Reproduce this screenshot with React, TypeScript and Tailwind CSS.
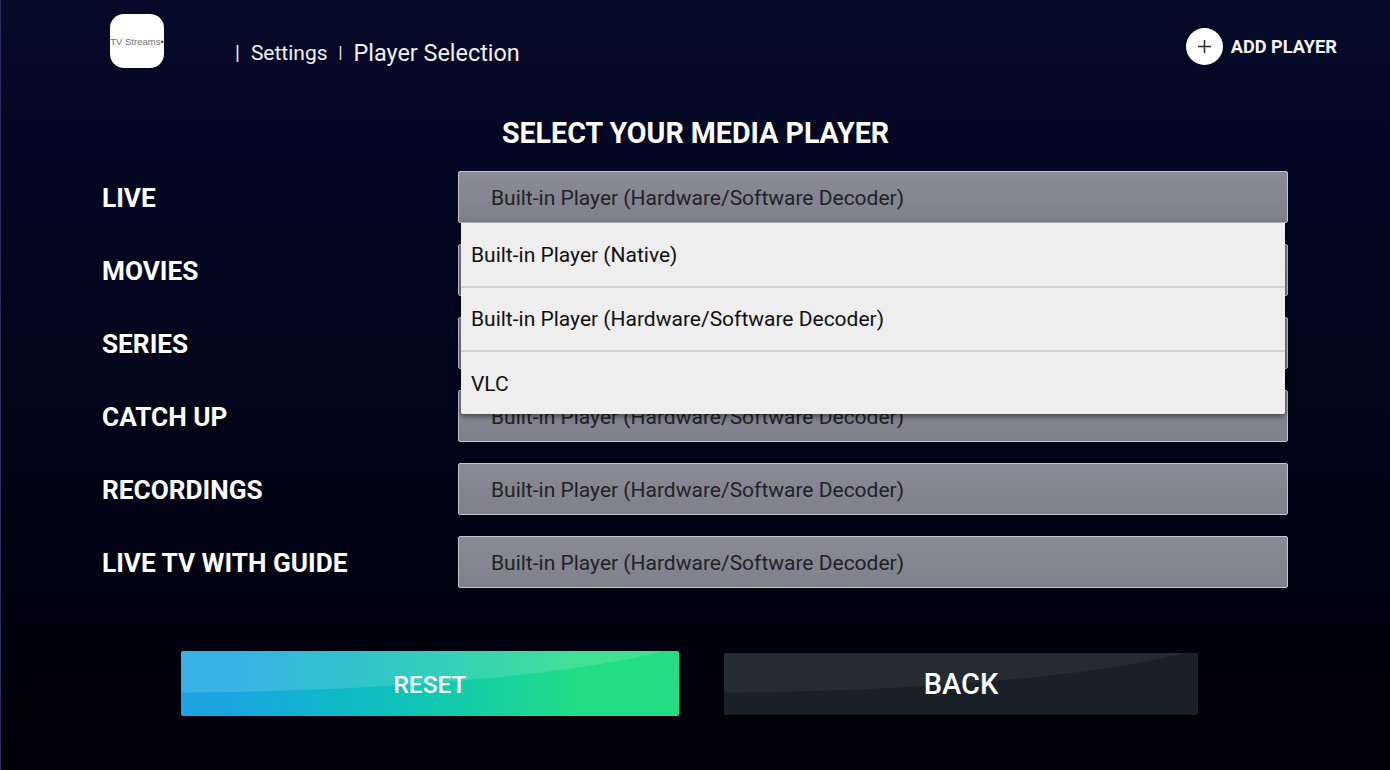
import React from 'react'

const players = ['LIVE', 'MOVIES', 'SERIES', 'CATCH UP', 'RECORDINGS', 'LIVE TV WITH GUIDE']
const options = ['Built-in Player (Native)', 'Built-in Player (Hardware/Software Decoder)', 'VLC']

function Gloss({ light }: { light?: boolean }) {
	return (
		<svg className="absolute inset-0 h-full w-full" viewBox="0 0 100 100" preserveAspectRatio="none">
			<path d="M0 0H97C78 38 40 62 0 64Z" fill="#ffffff" fillOpacity={light ? 0.14 : 0.05} />
		</svg>
	)
}

function App() {
	return (
		<div className="flex h-[770px] w-[1390px] flex-col overflow-hidden border-l border-[#2a2d5c] bg-gradient-to-b from-[#060a2a] via-[#03051a] to-[#00000a] font-['Roboto',sans-serif] text-white">
			<header className="flex h-[116px] shrink-0 items-start pl-[109px] pr-[52px]">
				<div className="mt-[14px] flex h-[54px] w-[54px] items-center justify-center rounded-[14px] bg-white pt-[2px]">
					<span className="font-['Liberation_Sans',sans-serif] text-[9.5px] whitespace-nowrap text-[#6f6f6f]">TV Streams<span className="text-[#c0202a]">•</span></span>
				</div>
				<nav className="mt-[38px] ml-[71px] flex items-center text-[21px] leading-[30px] text-[#f0f0f4]">
					<span className="text-[20px]">|</span>
					<span className="ml-[11px]">Settings</span>
					<span className="ml-[11px] text-[16px]">|</span>
					<span className="ml-[11px] text-[23.4px]">Player Selection</span>
				</nav>
				<button className="mt-[28px] ml-auto mr-[1px] flex items-center gap-[8px]">
					<span className="flex h-[37px] w-[37px] items-center justify-center rounded-full bg-white">
						<svg width="15" height="15" viewBox="0 0 15 15" stroke="#2a2a2a" strokeWidth="1.5">
							<path d="M7.5 1V14M1 7.5H14" />
						</svg>
					</span>
					<span className="pt-[1px] text-[18.2px] font-bold text-[#f2f3f7]">ADD PLAYER</span>
				</button>
			</header>

			<h1 className="h-[34px] shrink-0 text-center text-[28.6px] leading-[34px] font-bold">SELECT YOUR MEDIA PLAYER</h1>

			<div className="relative mt-[21px] ml-[101px] flex w-[1186px] flex-col gap-[21px]">
				{players.map((name) => (
					<div key={name} className="flex h-[52px] items-center">
						<span className="w-[356px] pt-[3px] text-[26.2px] font-bold">{name}</span>
						<div className="flex h-full flex-1 items-center rounded-[2px] border border-[#c4c5cc] bg-gradient-to-b from-[#8b8b97] to-[#7f808c] pt-[4px] pl-[32px] text-[21px] text-[#222226]">
							Built-in Player (Hardware/Software Decoder)
						</div>
					</div>
				))}
				<ul className="absolute top-[52px] left-[359px] w-[824px] rounded-b-[2px] bg-[#eeeeee] pt-[1px] shadow-[0_2px_6px_rgba(0,0,0,0.55)]">
					{options.map((opt, i) => (
						<li key={opt} className={i < 2 ? 'flex h-[64px] items-center border-b-2 border-[#d2d2d2] pt-[1px] pl-[10px] text-[21px] text-[#111111]' : 'flex h-[62px] items-center pt-[3px] pl-[10px] text-[21px] text-[#111111]'}>
							{opt}
						</li>
					))}
				</ul>
			</div>

			<div className="mt-[63px] ml-[180px] flex items-center gap-[45px]">
				<button className="relative flex h-[65px] w-[498px] items-center justify-center overflow-hidden rounded-[2px] bg-gradient-to-r from-[#1aa5e0] from-10% to-[#22dd84] to-80% pt-[4px] text-[24.5px] font-medium text-[#f5fffb]">
					<Gloss light />
					<span className="relative">RESET</span>
				</button>
				<button className="relative flex h-[62px] w-[474px] items-center justify-center overflow-hidden rounded-[2px] bg-[#1a2027] pt-[2px] text-[29px] font-medium">
					<Gloss />
					<span className="relative">BACK</span>
				</button>
			</div>
		</div>
	)
}

export default App
